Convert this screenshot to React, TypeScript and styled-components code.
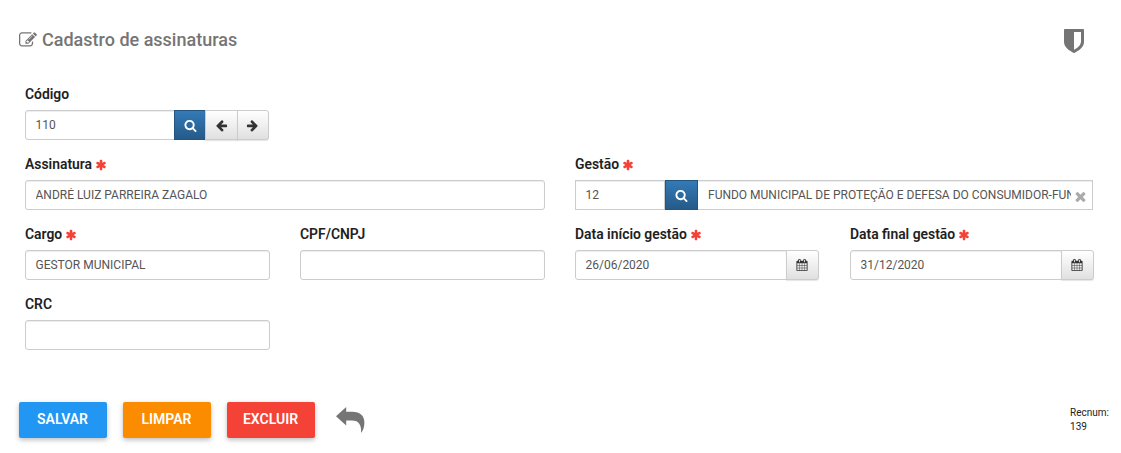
import React from 'react'
import styled, { createGlobalStyle } from 'styled-components'

const icons = {
  edit: 'M888 1184l116-116-152-152-116 116v56h96v96h56zm440-720q-16-16-33 1l-350 350q-17 17-1 33t33-1l350-350q17-17 1-33zm80 594v190q0 119-84.5 203.5t-203.5 84.5h-832q-119 0-203.5-84.5t-84.5-203.5v-832q0-119 84.5-203.5t203.5-84.5h832q63 0 117 25 15 7 18 23 3 17-9 29l-49 49q-14 14-32 8-23-6-45-6h-832q-66 0-113 47t-47 113v832q0 66 47 113t113 47h832q66 0 113-47t47-113v-126q0-13 9-22l64-64q15-15 35-7t20 29zm-96-738l288 288-672 672h-288v-288zm444 132l-92 92-288-288 92-92q28-28 68-28t68 28l152 152q28 28 28 68t-28 68z',
  search: 'M1216 832q0-185-131.5-316.5t-316.5-131.5-316.5 131.5-131.5 316.5 131.5 316.5 316.5 131.5 316.5-131.5 131.5-316.5zm512 832q0 52-38 90t-90 38q-54 0-90-38l-343-342q-179 124-399 124-143 0-273.5-55.5t-225-150-150-225-55.5-273.5 55.5-273.5 150-225 225-150 273.5-55.5 273.5 55.5 225 150 150 225 55.5 273.5q0 220-124 399l343 343q37 37 37 90z',
  left: 'M1664 896v128q0 53-32.5 90.5t-84.5 37.5h-704l293 294q38 36 38 90t-38 90l-75 76q-37 37-90 37-52 0-91-37l-651-652q-37-37-37-90 0-52 37-91l651-650q38-38 91-38 52 0 90 38l75 74q38 38 38 91t-38 91l-293 293h704q52 0 84.5 37.5t32.5 90.5z',
  right: 'M1600 960q0 54-37 91l-651 651q-39 37-91 37-51 0-90-37l-75-75q-38-38-38-91t38-91l293-293h-704q-52 0-84.5-37.5t-32.5-90.5v-128q0-53 32.5-90.5t84.5-37.5h704l-293-294q-38-36-38-90t38-90l75-75q38-38 90-38 53 0 91 38l651 651q37 35 37 90z',
  calendar: 'M192 1664h288v-288h-288v288zm352 0h320v-288h-320v288zm-352-352h288v-320h-288v320zm352 0h320v-320h-320v320zm-352-384h288v-288h-288v288zm736 736h320v-288h-320v288zm-384-736h320v-288h-320v288zm768 736h288v-288h-288v288zm-384-352h320v-320h-320v320zm-352-864v-288q0-13-9.5-22.5t-22.5-9.5h-64q-13 0-22.5 9.5t-9.5 22.5v288q0 13 9.5 22.5t22.5 9.5h64q13 0 22.5-9.5t9.5-22.5zm736 864h288v-320h-288v320zm-384-384h320v-288h-320v288zm384 0h288v-288h-288v288zm32-480v-288q0-13-9.5-22.5t-22.5-9.5h-64q-13 0-22.5 9.5t-9.5 22.5v288q0 13 9.5 22.5t22.5 9.5h64q13 0 22.5-9.5t9.5-22.5zm384-64v1280q0 52-38 90t-90 38h-1408q-52 0-90-38t-38-90v-1280q0-52 38-90t90-38h128v-96q0-66 47-113t113-47h64q66 0 113 47t47 113v96h384v-96q0-66 47-113t113-47h64q66 0 113 47t47 113v96h128q52 0 90 38t38 90z',
  asterisk: 'M1546 1050q46 26 59.5 77.5t-12.5 97.5l-64 110q-26 46-77.5 59.5t-97.5-12.5l-266-153v307q0 52-38 90t-90 38h-128q-52 0-90-38t-38-90v-307l-266 153q-46 26-97.5 12.5t-77.5-59.5l-64-110q-26-46-12.5-97.5t59.5-77.5l266-154-266-154q-46-26-59.5-77.5t12.5-97.5l64-110q26-46 77.5-59.5t97.5 12.5l266 153v-307q0-52 38-90t90-38h128q52 0 90 38t38 90v307l266-153q46-26 97.5-12.5t77.5 59.5l64 110q26 46 12.5 97.5t-59.5 77.5l-266 154z',
  shield: 'M1344 960v-640h-448v1137q119-63 213-137 235-184 235-360zm192-768v768q0 86-33.5 170.5t-83 150-118 127.5-126.5 103-121 77.5-89.5 49.5-42.5 20q-12 6-26 6t-26-6q-16-7-42.5-20t-89.5-49.5-121-77.5-126.5-103-118-127.5-83-150-33.5-170.5v-768q0-26 19-45t45-19h1152q26 0 45 19t19 45z',
  times: 'M1490 1322q0 40-28 68l-136 136q-28 28-68 28t-68-28l-294-294-294 294q-28 28-68 28t-68-28l-136-136q-28-28-28-68t28-68l294-294-294-294q-28-28-28-68t28-68l136-136q28-28 68-28t68 28l294 294 294-294q28-28 68-28t68 28l136 136q28 28 28 68t-28 68l-294 294 294 294q28 28 28 68z',
}

interface IconProps {
  name: keyof typeof icons;
  size: number;
}

const Icon = ({ name, size }: IconProps) => (
  <Svg width={size} height={size} viewBox="0 0 1792 1792" fill="currentColor">
    <path d={icons[name]} />
  </Svg>
)

interface FieldProps {
  label: string;
  required?: boolean;
  span?: number;
  children: React.ReactNode;
}

const Field = ({ label, required, span, children }: FieldProps) => (
  <FieldBox $span={span}>
    <Label>
      {label}
      {required && <Required><Icon name="asterisk" size={12} /></Required>}
    </Label>
    <Group>{children}</Group>
  </FieldBox>
)

const App = () => {
  return (
    <Page>
      <GlobalStyle />
      <Header>
        <Title>
          <Icon name="edit" size={18} />
          Cadastro de assinaturas
        </Title>
        <Shield><Icon name="shield" size={28} /></Shield>
      </Header>

      <Form>
        <Field label="Código" span={4}>
          <Input $width={150} $corners="3px 0 0 3px" defaultValue="110" />
          <SearchButton $width={32} $overlap><Icon name="search" size={13} /></SearchButton>
          <AddonButton $width={33} $flat><Icon name="left" size={13} /></AddonButton>
          <AddonButton $width={32}><Icon name="right" size={13} /></AddonButton>
        </Field>

        <Field label="Assinatura" required span={2}>
          <Input defaultValue="ANDRÉ LUIZ PARREIRA ZAGALO" />
        </Field>
        <Field label="Gestão" required span={2}>
          <Input $width={90} $corners="0" defaultValue="12" />
          <SearchButton $width={33}><Icon name="search" size={13} /></SearchButton>
          <ClearableBox>
            <ClearableInput defaultValue="FUNDO MUNICIPAL DE PROTEÇÃO E DEFESA DO CONSUMIDOR-FUNDECON" />
            <Clear><Icon name="times" size={15} /></Clear>
          </ClearableBox>
        </Field>

        <Field label="Cargo" required>
          <Input defaultValue="GESTOR MUNICIPAL" />
        </Field>
        <Field label="CPF/CNPJ">
          <Input />
        </Field>
        <Field label="Data início gestão" required>
          <Input $width={212} $corners="3px 0 0 3px" defaultValue="26/06/2020" />
          <AddonButton $width={33}><Icon name="calendar" size={12} /></AddonButton>
        </Field>
        <Field label="Data final gestão" required>
          <Input $width={212} $corners="3px 0 0 3px" defaultValue="31/12/2020" />
          <AddonButton $width={33}><Icon name="calendar" size={12} /></AddonButton>
        </Field>

        <Field label="CRC">
          <Input />
        </Field>
      </Form>

      <Footer>
        <ActionButton $color="#2196f3">SALVAR</ActionButton>
        <ActionButton $color="#fb8c00">LIMPAR</ActionButton>
        <ActionButton $color="#f44336">EXCLUIR</ActionButton>
        <BackButton>
          <Svg width={29} height={26} viewBox="0 0 29 26" fill="currentColor">
            <path d="M0 9.3L10.2 0V4.7H16C24.5 4.7 28.4 9.2 28.4 15.5C28.4 19.5 27.4 22.8 25.6 25.5H25.1C25.6 18 22.8 13.4 16 13.4H10.2V18.6Z" />
          </Svg>
        </BackButton>
        <Recnum>
          <span>Recnum:</span>
          <span>139</span>
        </Recnum>
      </Footer>
    </Page>
  )
}

const GlobalStyle = createGlobalStyle`
  * {
    box-sizing: border-box;
  }

  body {
    margin: 0;
    background-color: #fff;
    font-family: Roboto, sans-serif;
  }

  input, button {
    font-family: inherit;
  }
`;

const Svg = styled.svg`
  display: block;
  flex-shrink: 0;
`;

const Page = styled.main`
  width: 1121px;
  height: 453px;
  overflow: hidden;
`;

const Header = styled.header`
  display: flex;
  justify-content: space-between;
  height: 85px;
  padding: 27px 33.5px 0 19px;
  color: #757575;
`;

const Title = styled.h1`
  display: flex;
  align-items: center;
  gap: 5px;
  height: 25px;
  margin: 0;
  font-size: 18px;
  font-weight: 500;
`;

const Shield = styled.div`
  height: 28px;
`;

const Form = styled.form`
  display: grid;
  grid-template-columns: repeat(4, 245px);
  grid-auto-rows: 70px;
  column-gap: 30px;
  padding-left: 25px;
`;

const FieldBox = styled.div<{ $span?: number }>`
  grid-column: span ${({ $span }) => $span ?? 1};
  min-width: 0;
`;

const Label = styled.label`
  display: flex;
  align-items: center;
  gap: 3px;
  height: 18px;
  margin-bottom: 7px;
  color: #212121;
  font-size: 13.9px;
  font-weight: 600;
`;

const Required = styled.span`
  padding-top: 2px;
  color: #f44336;
`;

const Group = styled.div`
  display: flex;
  height: 30px;
`;

const Input = styled.input<{ $width?: number; $corners?: string }>`
  width: ${({ $width }) => ($width ? `${$width}px` : '100%')};
  height: 30px;
  padding: 0 9.5px;
  border: 1px solid #ccc;
  border-radius: ${({ $corners }) => $corners ?? '3px'};
  box-shadow: inset 0 1px 1px rgba(0, 0, 0, 0.075);
  background-color: #fff;
  color: #555;
  font-size: 12px;
  outline: none;
`;

const BaseButton = styled.button<{ $width: number }>`
  display: flex;
  align-items: center;
  justify-content: center;
  flex-shrink: 0;
  width: ${({ $width }) => $width}px;
  height: 30px;
  padding: 0;
`;

const SearchButton = styled(BaseButton)<{ $overlap?: boolean }>`
  margin-left: ${({ $overlap }) => ($overlap ? '-1px' : '0')};
  border: 1px solid #245580;
  background-image: linear-gradient(#337ab7, #265a88);
  color: #fff;
`;

const AddonButton = styled(BaseButton)<{ $flat?: boolean }>`
  margin-left: -1px;
  padding-right: 1px;
  border: 1px solid #ccc;
  border-radius: ${({ $flat }) => ($flat ? '0' : '0 3px 3px 0')};
  box-shadow: 0 1px 1px rgba(0, 0, 0, 0.1);
  background-image: linear-gradient(#fff, #e0e0e0);
  color: #333;
`;

const ClearableBox = styled.div`
  display: flex;
  align-items: center;
  width: 395px;
  height: 30px;
  padding: 0 4px 0 10px;
  border: 1px solid #ccc;
  border-left: 0;
  box-shadow: inset 0 1px 1px rgba(0, 0, 0, 0.075);
`;

const ClearableInput = styled.input`
  width: 363px;
  height: 26px;
  padding: 0;
  border: 0;
  background-color: transparent;
  color: #555;
  font-size: 12px;
  outline: none;
`;

const Clear = styled.span`
  padding-top: 3px;
  margin-left: 2px;
  color: #aaa;
`;

const Footer = styled.footer`
  display: flex;
  gap: 16px;
  padding: 37px 12px 0 19px;
`;

const ActionButton = styled.button<{ $color: string }>`
  width: 88px;
  height: 36px;
  padding: 0 1px 2px 0;
  border: 0;
  border-radius: 2px;
  box-shadow: 0 2px 5px rgba(0, 0, 0, 0.26);
  background-color: ${({ $color }) => $color};
  color: #fff;
  font-size: 14px;
  font-weight: 600;
`;

const BackButton = styled.div`
  padding: 5px 0 0 5px;
  color: #757575;
`;

const Recnum = styled.div`
  display: flex;
  flex-direction: column;
  margin-left: auto;
  padding-top: 4px;
  color: #212121;
  font-size: 10px;
  line-height: 14px;
`;

export default App
